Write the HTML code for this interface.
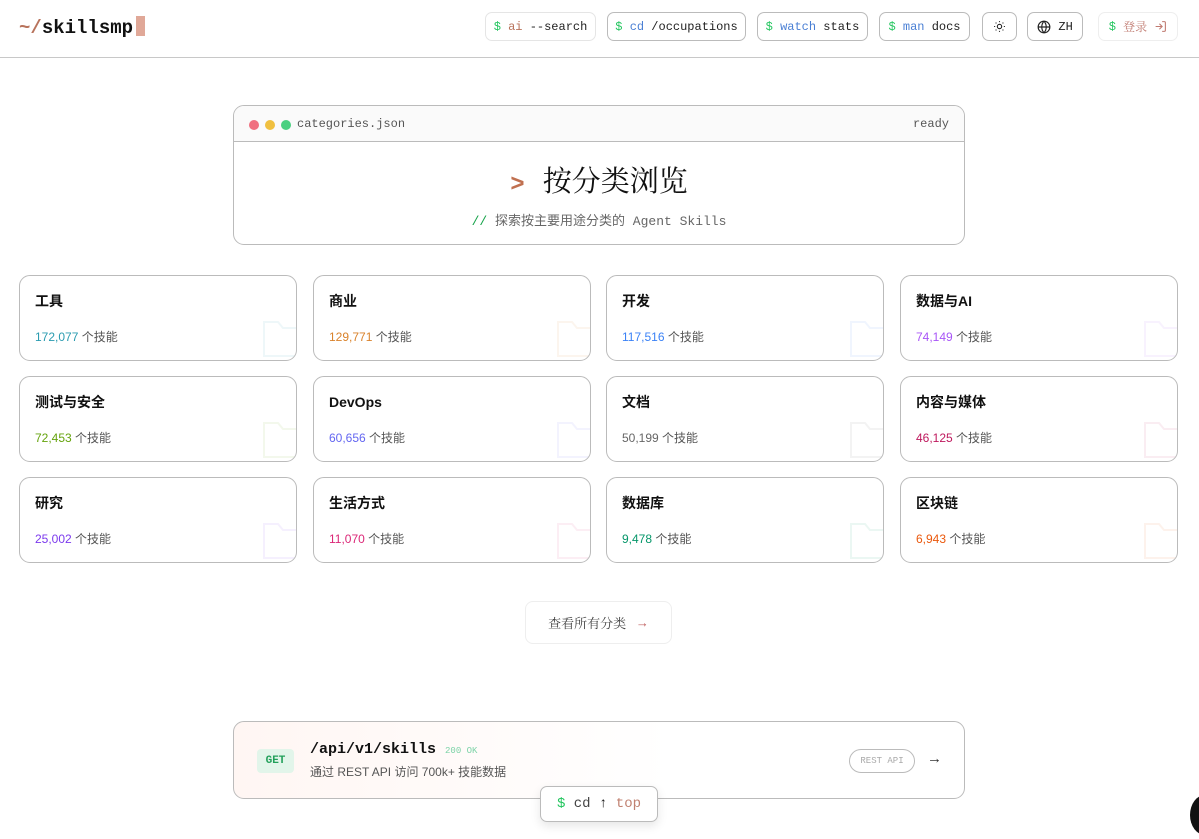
<!DOCTYPE html>
<html><head><meta charset="utf-8"><style>
*{box-sizing:border-box;margin:0;padding:0}
body{width:1199px;height:839px;overflow:hidden;background:#fff;font-family:"Liberation Sans","Noto Sans CJK SC",sans-serif;color:#111;position:relative}
.mono{font-family:"Liberation Mono","Noto Sans CJK SC",monospace}
.hdr{position:absolute;left:0;top:0;width:1199px;height:58px;border-bottom:1px solid #c8c8c8}
.logo{position:absolute;left:19px;top:16px;font-size:19px;font-weight:bold}
.btn{position:absolute;top:12px;height:29px;border:1px solid #bbb;border-radius:7px;font-size:12px;display:flex;align-items:center;justify-content:center;color:#222}
.g{color:#22c55e}.b{color:#4a7fd4}
.term{position:absolute;left:233px;top:105px;width:732px;height:140px;border:1px solid #bbb;border-radius:11px;overflow:hidden}
.th{height:36px;border-bottom:1px solid #bbb;background:#fafafa;position:relative;font-size:12px;color:#555}
.dot{position:absolute;top:14px;width:10px;height:10px;border-radius:50%}
.card{position:absolute;width:278px;height:86px;border:1px solid #bbb;border-radius:11px;overflow:hidden}
.card .t{position:absolute;left:15px;top:15px;font-size:14px;font-weight:bold;line-height:20px}
.card .c{position:absolute;left:15px;top:53px;font-size:12px;color:#555;line-height:16px}
.card svg{position:absolute;right:-12px;top:42px}
</style></head><body>
<div class="hdr">
<div class="logo mono"><span style="color:#b8735c">~/</span>skillsmp<span style="display:inline-block;width:9px;height:20px;background:#e0a898;vertical-align:-3px;margin-left:3px"></span></div>
<div class="btn mono" style="left:485px;width:111px;border-color:#e5e5e5"><span class="g">$</span>&nbsp;<span style="color:#b8735c">ai</span>&nbsp;--search</div>
<div class="btn mono" style="left:607px;width:139px"><span class="g">$</span>&nbsp;<span class="b">cd</span>&nbsp;/occupations</div>
<div class="btn mono" style="left:757px;width:111px"><span class="g">$</span>&nbsp;<span class="b">watch</span>&nbsp;stats</div>
<div class="btn mono" style="left:879px;width:91px"><span class="g">$</span>&nbsp;<span class="b">man</span>&nbsp;docs</div>
<div class="btn" style="left:982px;width:35px"><svg width="13" height="13" viewBox="0 0 24 24" fill="none" stroke="#222" stroke-width="2"><circle cx="12" cy="12" r="4"/><path d="M12 2v2M12 20v2M2 12h2M20 12h2M4.9 4.9l1.4 1.4M17.7 17.7l1.4 1.4M4.9 19.1l1.4-1.4M17.7 6.3l1.4-1.4"/></svg></div>
<div class="btn mono" style="left:1027px;width:56px"><svg width="14" height="14" viewBox="0 0 24 24" fill="none" stroke="#222" stroke-width="2"><circle cx="12" cy="12" r="10"/><path d="M2 12h20M12 2a15 15 0 0 1 0 20M12 2a15 15 0 0 0 0 20"/></svg>&nbsp;ZH</div>
<div class="btn mono" style="left:1098px;width:80px;border-color:#eee;color:#c07a70"><span class="g">$</span>&nbsp;<span style="font-family:'Liberation Serif','Noto Serif CJK SC',serif">登录</span>&nbsp;<svg width="13" height="13" viewBox="0 0 24 24" fill="none" stroke="#c07a70" stroke-width="2"><path d="M15 3h4a2 2 0 0 1 2 2v14a2 2 0 0 1-2 2h-4M10 17l5-5-5-5M15 12H3"/></svg></div>
</div>
<div class="term">
<div class="th mono"><span class="dot" style="left:15px;background:#f07080"></span><span class="dot" style="left:31px;background:#f0c040"></span><span class="dot" style="left:47px;background:#4ad080"></span><span style="position:absolute;left:63px;top:11px">categories.json</span><span style="position:absolute;right:15px;top:11px">ready</span></div>
<div style="text-align:center;padding-top:17px;font-size:29px;font-family:'Liberation Serif','Noto Serif CJK SC',serif"><span class="mono" style="color:#c07050;font-weight:bold;font-size:24px;margin-right:18px">&gt;</span>按分类浏览</div>
<div class="mono" style="text-align:center;margin-top:10px;font-size:13px;color:#666"><span style="color:#16a34a">//</span> 探索按主要用途分类的 Agent Skills</div>
</div>
<div id="cards"></div>
<div style="position:absolute;left:525px;top:601px;width:147px;height:43px;border:1px solid #eee;border-radius:8px;display:flex;align-items:center;justify-content:center;font-size:13px;color:#444;font-family:'Liberation Serif','Noto Serif CJK SC',serif">查看所有分类&nbsp;&nbsp;&nbsp;<span style="color:#c06060">→</span></div>
<div style="position:absolute;left:233px;top:721px;width:732px;height:78px;border:1px solid #bbb;border-radius:11px;background:linear-gradient(90deg,#fff6f3,#fff 60%)">
<div class="mono" style="position:absolute;left:23px;top:27px;width:37px;height:24px;background:#e2f5ea;border-radius:4px;color:#22a05a;font-size:11px;font-weight:bold;display:flex;align-items:center;justify-content:center">GET</div>
<div class="mono" style="position:absolute;left:76px;top:19px;font-size:15px;font-weight:bold">/api/v1/skills <span style="font-size:9px;color:#7dd3a8;font-weight:normal">200 OK</span></div>
<div style="position:absolute;left:76px;top:41px;font-size:12px;color:#555">通过 REST API 访问 700k+ 技能数据</div>
<div class="mono" style="position:absolute;left:615px;top:27px;width:66px;height:24px;border:1px solid #bbb;border-radius:12px;font-size:9px;color:#aaa;display:flex;align-items:center;justify-content:center">REST API</div>
<div style="position:absolute;left:693px;top:28px;font-size:15px;color:#333">→</div>
</div>
<div class="mono" style="position:absolute;left:540px;top:786px;width:118px;height:36px;border:1px solid #bbb;border-radius:7px;background:#fff;box-shadow:0 4px 10px rgba(0,0,0,.1);display:flex;align-items:center;justify-content:center;font-size:14px;color:#444"><span class="g">$</span>&nbsp;cd&nbsp;<b style="color:#111">↑</b>&nbsp;<span style="color:#c08070">top</span></div>
<div style="position:absolute;left:1190px;top:795px;width:30px;height:40px;border-radius:50%;background:#111"></div>
<script>
var d=[["工具","172,077","#2a9bb0"],["商业","129,771","#d9822b"],["开发","117,516","#3b82f6"],["数据与AI","74,149","#a855f7"],["测试与安全","72,453","#65a30d"],["DevOps","60,656","#6366f1"],["文档","50,199","#666"],["内容与媒体","46,125","#be185d"],["研究","25,002","#7c3aed"],["生活方式","11,070","#db2777"],["数据库","9,478","#059669"],["区块链","6,943","#ea580c"]];
var xs=[19,313,606,900],h="";
d.forEach(function(e,i){var x=xs[i%4],y=275+Math.floor(i/4)*101;
h+='<div class="card" style="left:'+x+'px;top:'+y+'px"><div class="t">'+e[0]+'</div><div class="c"><span style="color:'+e[2]+'">'+e[1]+'</span> 个技能</div><svg width="46" height="40" viewBox="0 0 46 40" fill="none" stroke="'+e[2]+'" stroke-opacity=".08" stroke-width="2"><path d="M2 38V4h14l5 6h26v28z"/></svg></div>';});
document.getElementById("cards").innerHTML=h;
</script>
</body></html>
